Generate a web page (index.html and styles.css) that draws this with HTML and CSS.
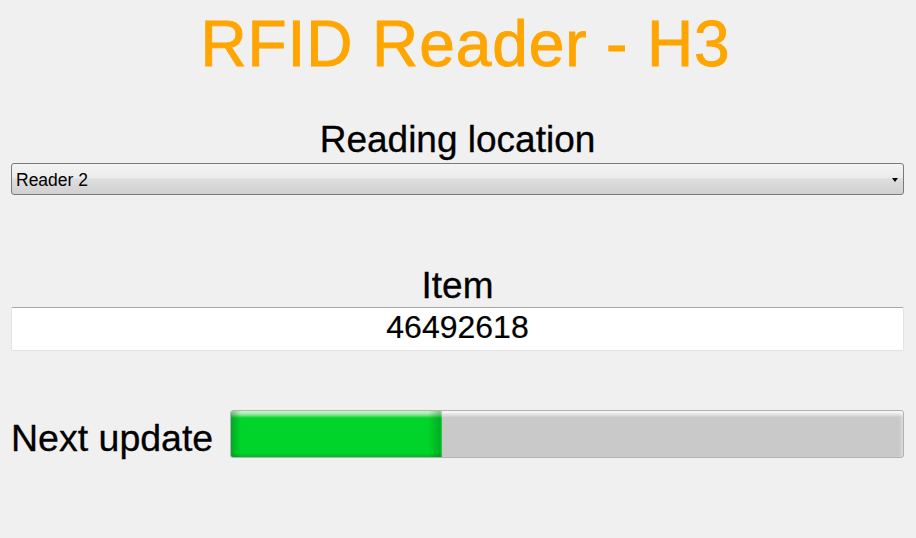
FILE: index.html
```html
<!DOCTYPE html>
<html lang="en">
<head>
<meta charset="utf-8">
<title>RFID Reader - H3</title>
<link rel="stylesheet" href="styles.css">
</head>
<body>
<main class="app">
  <h1 class="title">RFID Reader - H3</h1>

  <section class="section section--location">
    <h2 class="label">Reading location</h2>
    <div class="select">
      <span class="select__value">Reader 2</span>
      <span class="select__arrow"></span>
    </div>
  </section>

  <section class="section section--item">
    <h2 class="label label--item">Item</h2>
    <div class="item-box">46492618</div>
  </section>

  <section class="update-row">
    <div class="update-label">Next update</div>
    <div class="progress">
      <div class="progress__fill" style="width: 31.4%"></div>
    </div>
  </section>
</main>
</body>
</html>
```

FILE: styles.css
```css
html, body {
  margin: 0;
  padding: 0;
}

body {
  background: #f0f0f0;
  font-family: "Liberation Sans", Arial, sans-serif;
  color: #000;
  width: 916px;
  height: 538px;
  overflow: hidden;
}

.app {
  padding: 8px 12px 0 11px;
  display: flex;
  flex-direction: column;
}

.title {
  margin: 0;
  font-weight: normal;
  font-size: 64px;
  line-height: 72px;
  letter-spacing: 0.9px;
  color: #ffa500;
  -webkit-text-stroke: 0.9px #ffa500;
  text-align: center;
  padding-left: 16px;
}

.section {
  display: flex;
  flex-direction: column;
}

.section--location {
  margin-top: 38px;
}

.label {
  margin: 0;
  font-weight: normal;
  font-size: 37px;
  line-height: 44px;
  text-align: center;
  -webkit-text-stroke: 0.3px #000;
}

.select {
  margin-top: 1px;
  height: 30px;
  border: 1px solid #7a7a7a;
  border-radius: 3px;
  background: linear-gradient(#f3f3f3 0%, #ececec 45%, #dedede 50%, #d0d0d0 100%);
  display: flex;
  align-items: center;
  padding: 0 5px 0 4px;
}

.select__value {
  flex: 1;
  font-size: 17.5px;
  line-height: 30px;
  padding-top: 1px;
}

.select__arrow {
  width: 0;
  height: 0;
  border-left: 3.5px solid transparent;
  border-right: 3.5px solid transparent;
  border-top: 4px solid #000;
  margin-top: 2px;
}

.section--item {
  margin-top: 70px;
}

.label--item {
  line-height: 42px;
}

.item-box {
  height: 39px;
  padding-bottom: 3px;
  background: #fff;
  border: 1px solid #e3e3e3;
  border-top-color: #a8a8a8;
  border-radius: 2px;
  font-size: 32px;
  line-height: 38px;
  text-align: center;
  -webkit-text-stroke: 0.2px #000;
}

.update-row {
  margin-top: 59px;
  display: flex;
  align-items: flex-start;
}

.update-label {
  width: 219px;
  flex-shrink: 0;
  font-size: 37.5px;
  line-height: 47px;
  padding-top: 5px;
  white-space: nowrap;
  -webkit-text-stroke: 0.3px #000;
}

.progress {
  flex: 1;
  height: 46px;
  border: 1px solid #b2b2b2;
  border-radius: 3px;
  background:
    linear-gradient(#f4f4f4 0px, #f4f4f4 2px, #e2e2e2 3px, #dadada 5px, #c9c9c9 6px, #c9c9c9 100%);
  box-shadow: inset -3px 0 3px -1px rgba(255, 255, 255, 0.35);
  overflow: hidden;
  display: flex;
}

.progress__fill {
  height: 100%;
  background:
    linear-gradient(90deg, rgba(0, 90, 20, 0.35) 0px, rgba(0, 90, 20, 0) 10px, rgba(0, 90, 20, 0) calc(100% - 14px), rgba(0, 90, 20, 0.3) calc(100% - 2px), rgba(120, 220, 130, 0.3) 100%),
    linear-gradient(#c6f6c6 0px, #b0f0b4 2px, #7fe494 4px, #2fd84a 6px, #00d42a 7px, #00d42a calc(100% - 4px), #00b826 100%);
}
```
